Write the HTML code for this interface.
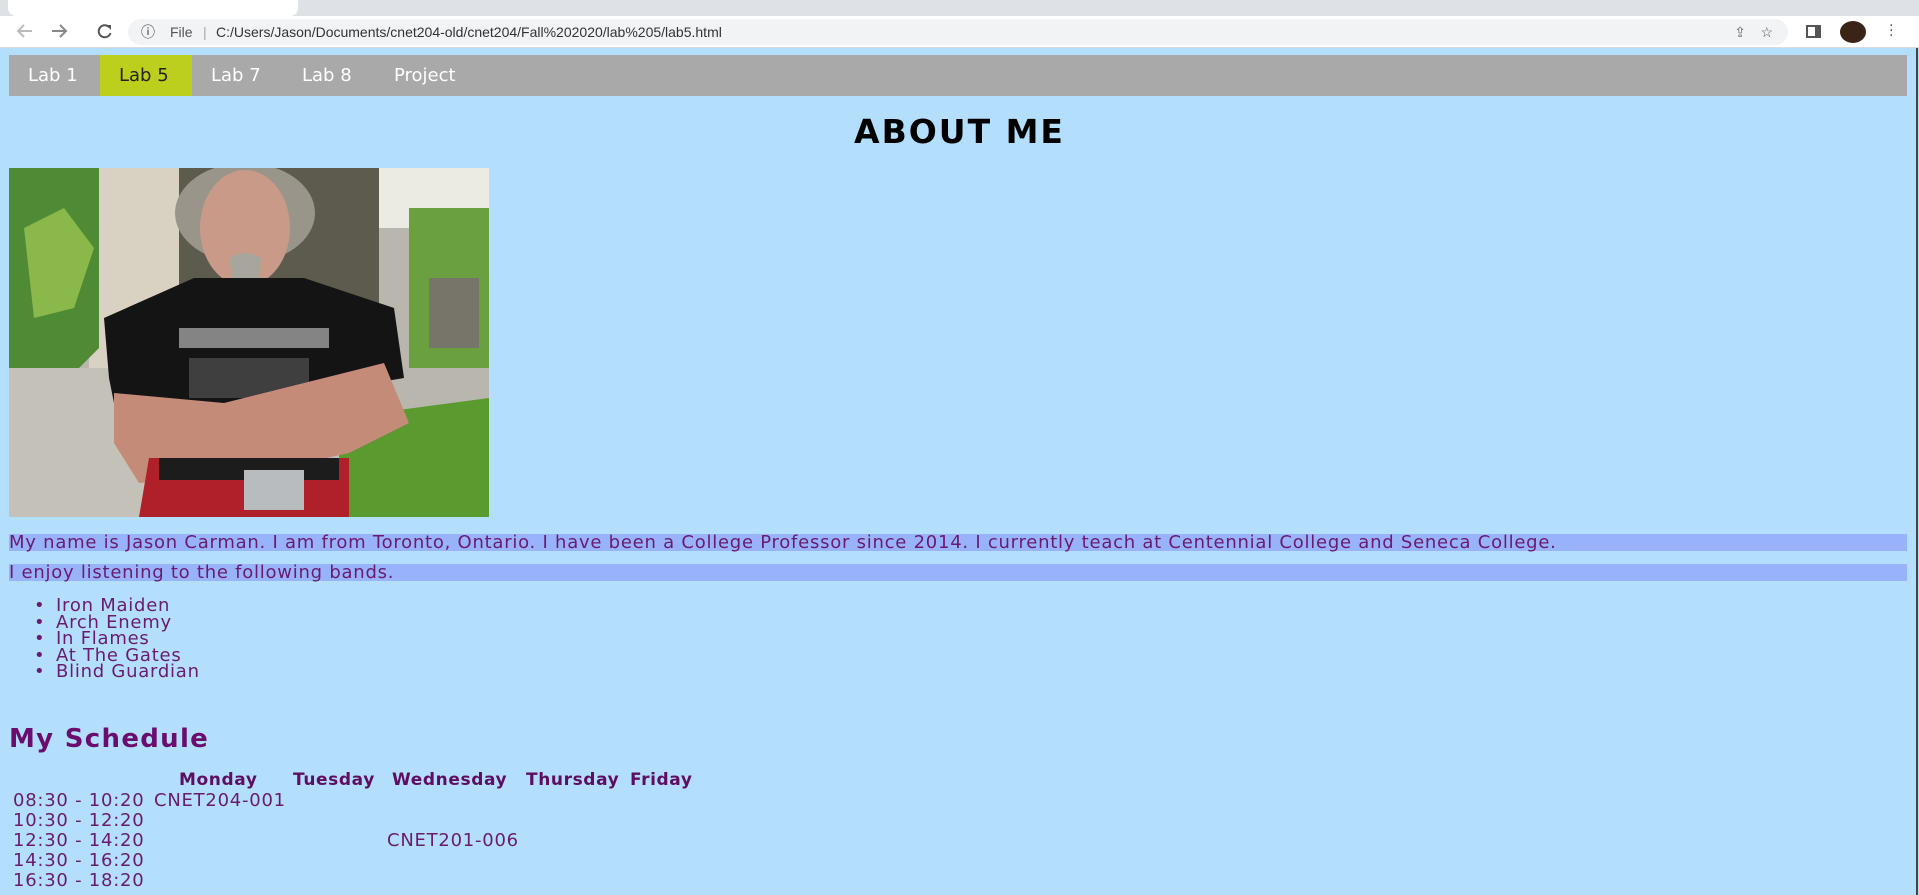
<!DOCTYPE html>
<html><head><meta charset="utf-8"><style>
*{margin:0;padding:0;box-sizing:border-box}
html,body{width:1919px;height:895px;overflow:hidden;background:#b3dffc;font-family:"DejaVu Sans","Liberation Sans",sans-serif}
#tabs{position:absolute;left:0;top:0;width:1919px;height:16px;background:#dee1e6}
#tab{position:absolute;left:8px;top:0;width:290px;height:16px;background:#fff;border-radius:0 0 8px 8px}
#bar{position:absolute;left:0;top:16px;width:1919px;height:32px;background:#fff;border-bottom:1px solid #d8dadd}
#url{position:absolute;left:128px;top:3px;width:1660px;height:26px;background:#f1f3f4;border-radius:13px;font:14px "Liberation Sans",sans-serif;color:#333;line-height:26px}
#nav{position:absolute;left:9px;top:55px;width:1898px;height:41px;background:#a9a9a9}
#nav span{position:absolute;top:0;height:41px;line-height:41px;color:#fff;font-size:18px}
h1{position:absolute;left:0;width:1919px;top:112px;text-align:center;font-size:33px;letter-spacing:2px;font-weight:bold;color:#000}
.p{position:absolute;left:9px;width:1898px;height:17px;background:#99b3fb;color:#6a1b6e;font-size:18px;letter-spacing:0.75px;line-height:18px;white-space:nowrap}
ul{position:absolute;left:40px;top:598px;color:#6a1b6e;font-size:18px;letter-spacing:0.75px;line-height:16.5px;list-style:none}
ul li:before{content:"•";position:absolute;left:-6px}
ul li{padding-left:16px}
h2{position:absolute;left:9px;top:724px;font-size:26px;letter-spacing:1.3px;color:#6a0d6e;font-weight:bold}
.t{position:absolute;color:#6a1b6e;font-size:18px;letter-spacing:0.75px;white-space:nowrap}
.b{font-weight:bold;color:#5e0d63;font-size:17px;letter-spacing:0.6px}
</style></head><body>
<div id="tabs"><div id="tab"></div></div>
<div id="bar">
<svg width="120" height="32" style="position:absolute;left:0;top:0"><g stroke="#bbb" stroke-width="2" fill="none"><path d="M32 15h-14M24 9l-6 6 6 6"/></g><g stroke="#888" stroke-width="2" fill="none"><path d="M52 15h14M60 9l6 6-6 6"/></g><path d="M109 11a6 6 0 1 0 1.5 6" stroke="#555" stroke-width="2" fill="none"/><path d="M106 9h5v5z" fill="#555"/></svg>
<div id="url"><span style="position:absolute;left:13px;">ⓘ</span><span style="position:absolute;left:42px;color:#555">File</span><span style="position:absolute;left:75px;color:#aaa">|</span><span style="position:absolute;left:88px">C:/Users/Jason/Documents/cnet204-old/cnet204/Fall%202020/lab%205/lab5.html</span><span style="position:absolute;right:42px;color:#666">⇪</span><span style="position:absolute;right:15px;color:#555">☆</span></div>
<div style="position:absolute;left:1806px;top:9px;width:15px;height:13px;border:2px solid #555;border-right-width:6px"></div>
<div style="position:absolute;left:1840px;top:5px;width:26px;height:22px;border-radius:50%;background:#3a2418"></div>
<div style="position:absolute;left:1889px;top:8px;color:#555;font-size:14px;line-height:5px">·<br>·<br>·</div>
</div>
<div id="nav">
<span style="left:19px">Lab 1</span>
<span style="left:91px;width:92px;background:#bccf1c;color:#222;padding-left:19px">Lab 5</span>
<span style="left:202px">Lab 7</span>
<span style="left:293px">Lab 8</span>
<span style="left:385px">Project</span>
</div>
<h1>ABOUT ME</h1>
<svg style="position:absolute;left:9px;top:168px" width="480" height="349" viewBox="0 0 480 349">
<rect width="480" height="349" fill="#b9b6ad"/>
<rect x="80" y="0" width="90" height="200" fill="#d9d1c2"/>
<rect x="170" y="0" width="200" height="150" fill="#5d5a4e"/>
<rect x="370" y="0" width="110" height="60" fill="#ebebe4"/>
<path d="M0 0h90v180l-20 20H0z" fill="#4f8a35"/>
<path d="M15 60l40-20 30 40-20 60-40 10z" fill="#8ab84a"/>
<path d="M400 40h80v160h-80z" fill="#6aa040"/>
<path d="M420 110h50v70h-50z" fill="#777469"/>
<path d="M0 200h330v149H0z" fill="#c3c1b8"/>
<path d="M330 250l150-20v119H330z" fill="#5a9a2e"/>
<ellipse cx="236" cy="45" rx="70" ry="50" fill="#9a958a"/>
<ellipse cx="236" cy="60" rx="45" ry="58" fill="#c99a88"/>
<path d="M220 90q16-10 32 0l-4 60-10 20-8-20z" fill="#a8a59c"/>
<path d="M95 150l90-40h110l90 30 10 70-60 10v40H110l-10-50z" fill="#141414"/>
<path d="M170 160h150v20H170z" fill="#cfcfcf" opacity=".6"/>
<path d="M180 190h120v40H180z" fill="#6a6a6a" opacity=".5"/>
<path d="M105 225l110 10 160-40 25 60-60 30-90 20-120 10-25-40z" fill="#c48b78"/>
<path d="M140 290h200v59H130z" fill="#b0202a"/>
<path d="M150 290h180v22H150z" fill="#1c1c1c"/>
<rect x="235" y="302" width="60" height="40" fill="#b8bcbf"/>
</svg>
<div class="p" style="top:534px">My name is Jason Carman. I am from Toronto, Ontario. I have been a College Professor since 2014. I currently teach at Centennial College and Seneca College.</div>
<div class="p" style="top:564px">I enjoy listening to the following bands.</div>
<ul><li>Iron Maiden</li><li>Arch Enemy</li><li>In Flames</li><li>At The Gates</li><li>Blind Guardian</li></ul>
<h2>My Schedule</h2>
<div class="t b" style="left:179px;top:770px">Monday</div>
<div class="t b" style="left:293px;top:770px">Tuesday</div>
<div class="t b" style="left:392px;top:770px">Wednesday</div>
<div class="t b" style="left:526px;top:770px">Thursday</div>
<div class="t b" style="left:630px;top:770px">Friday</div>
<div class="t" style="left:13px;top:790px">08:30 - 10:20</div>
<div class="t" style="left:154px;top:790px">CNET204-001</div>
<div class="t" style="left:13px;top:810px">10:30 - 12:20</div>
<div class="t" style="left:13px;top:830px">12:30 - 14:20</div>
<div class="t" style="left:387px;top:830px">CNET201-006</div>
<div class="t" style="left:13px;top:850px">14:30 - 16:20</div>
<div class="t" style="left:13px;top:870px">16:30 - 18:20</div>
<div style="position:absolute;left:1916px;top:48px;width:2px;height:847px;background:#444"></div>
</body></html>
